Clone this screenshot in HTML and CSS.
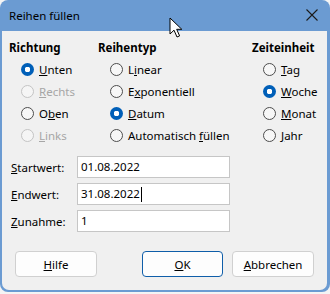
FILE: index.html
```html
<!DOCTYPE html>
<html lang="de">
<head>
  <meta charset="UTF-8" />
  <title>Reihen füllen</title>
  <link rel="stylesheet" href="styles.css">
</head>
<body>
  <div class="window">
    <div class="titlebar">
      <span class="title">Reihen füllen</span>
      <svg class="close" width="12" height="12" viewBox="0 0 12 12">
        <path d="M0.5 0.5 L11.5 11.5 M11.5 0.5 L0.5 11.5" stroke="#1b1b1b" stroke-width="1.1" fill="none"/>
      </svg>
    </div>
    <div class="content">
      <div class="groups">
        <div class="group col1">
          <div class="heading">Richtung</div>
          <div class="option"><span class="radio checked"></span><span><u>U</u>nten</span></div>
          <div class="option disabled"><span class="radio"></span><span><u>R</u>echts</span></div>
          <div class="option"><span class="radio"></span><span>O<u>b</u>en</span></div>
          <div class="option disabled"><span class="radio"></span><span><u>L</u>inks</span></div>
        </div>
        <div class="group col2">
          <div class="heading">Reihentyp</div>
          <div class="option"><span class="radio"></span><span>L<u>i</u>near</span></div>
          <div class="option"><span class="radio"></span><span>E<u>x</u>ponentiell</span></div>
          <div class="option"><span class="radio checked"></span><span><u>D</u>atum</span></div>
          <div class="option"><span class="radio"></span><span>Automatisch <u>f</u>üllen</span></div>
        </div>
        <div class="group col3">
          <div class="heading">Zeiteinheit</div>
          <div class="option"><span class="radio"></span><span><u>T</u>ag</span></div>
          <div class="option"><span class="radio checked"></span><span><u>W</u>oche</span></div>
          <div class="option"><span class="radio"></span><span><u>M</u>onat</span></div>
          <div class="option"><span class="radio"></span><span><u>J</u>ahr</span></div>
        </div>
      </div>

      <div class="fields">
        <div class="field">
          <span class="label"><u>S</u>tartwert:</span>
          <div class="edit">01.08.2022</div>
        </div>
        <div class="field">
          <span class="label"><u>E</u>ndwert:</span>
          <div class="edit">31.08.2022<span class="caret"></span></div>
        </div>
        <div class="field">
          <span class="label"><u>Z</u>unahme:</span>
          <div class="edit">1</div>
        </div>
      </div>

      <div class="buttons">
        <button class="btn"><u>H</u>ilfe</button>
        <span class="spacer"></span>
        <button class="btn default"><u>O</u>K</button>
        <button class="btn"><u>A</u>bbrechen</button>
      </div>
    </div>
  </div>

  <!-- mouse pointer over the title bar -->
  <svg class="pointer" width="14" height="22" viewBox="0 0 14 22">
    <path d="M1 1 L1 17 L5 13.2 L8 20 L10.6 18.9 L7.7 12.3 L12.8 12.3 Z" fill="#fff" stroke="#000" stroke-width="1" stroke-linejoin="round"/>
  </svg>
</body>
</html>
```

FILE: styles.css
```css
body {
  margin: 0;
  background: #f4f4f4;
  font-family: 'Noto Sans', 'Open Sans', sans-serif;
  font-size: 11.5px;
  color: #000000;
}
.window {
  width: 330px;
  height: 292px;
  background: #6b9bd2;
  border-radius: 8px;
  padding: 0 3px 2px 2px;
  box-sizing: border-box;
  display: flex;
  flex-direction: column;
}
.titlebar {
  height: 31px;
  display: flex;
  align-items: center;
  justify-content: space-between;
  padding: 0 9px 0 7px;
}
.title {
  color: #000000;
  margin-top: -1px;
}
.close {
  margin-top: -1px;
}
.content {
  flex: 1;
  background: #f0f0f0;
  border-radius: 0 0 7px 7px;
  padding: 9px 13px 13px 7px;
  display: flex;
  flex-direction: column;
}
.groups {
  display: flex;
}
.group {
  flex: none;
}
.col1 {
  width: 89px;
}
.col2 {
  width: 154px;
}
.heading {
  font-weight: bold;
  line-height: 16px;
  height: 16px;
  margin-bottom: 2px;
}
.option {
  height: 22px;
  display: flex;
  align-items: center;
  padding-left: 12px;
  gap: 5px;
}
.col3 .option {
  padding-left: 11px;
}
.option.disabled {
  color: #a6a6a6;
}
.radio {
  width: 13px;
  height: 13px;
  box-sizing: border-box;
  border: 1px solid #4d4d4d;
  border-radius: 50%;
  background: #f7f7f7;
  flex: none;
}
.option.disabled .radio {
  border-color: #c4c4c4;
  background: #f5f5f5;
}
.radio.checked {
  border: none;
  background: radial-gradient(circle, #ffffff 0 2.6px, #005fb8 3px);
}
.fields {
  margin-top: 10px;
  display: flex;
  flex-direction: column;
  gap: 5px;
}
.field {
  display: flex;
  align-items: center;
  padding-left: 2px;
}
.label {
  width: 66px;
}
.edit {
  width: 153px;
  height: 22px;
  box-sizing: border-box;
  background: #ffffff;
  border: 1px solid #c6c6c6;
  padding: 0 3px;
  line-height: 20px;
  display: flex;
  align-items: center;
}
.caret {
  display: inline-block;
  width: 1px;
  height: 15px;
  background: #000000;
  margin-left: 1px;
}
.buttons {
  margin-top: auto;
  display: flex;
  padding-left: 6px;
  gap: 9px;
}
.spacer {
  flex: 1;
}
.btn {
  width: 82px;
  height: 26px;
  background: #fdfdfd;
  border: 1px solid #d0d0d0;
  border-radius: 4px;
  font-family: inherit;
  font-size: 11.5px;
  color: #000000;
  padding: 0;
}
.btn.default {
  border-color: #0f5ea9;
  width: 81px;
}
.pointer {
  position: absolute;
  left: 169px;
  top: 17px;
}
```
